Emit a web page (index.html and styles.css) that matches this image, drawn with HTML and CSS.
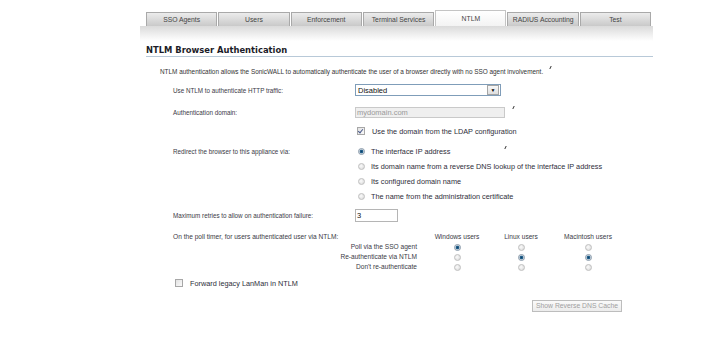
FILE: index.html
```html
<!DOCTYPE html>
<html>
<head>
    <title>NTLM</title>
    <link rel="stylesheet" href="styles.css">
</head>
<body>
    <div class="page">
        <div class="tabs">
            <div class="tab">SSO Agents</div>
            <div class="tab">Users</div>
            <div class="tab">Enforcement</div>
            <div class="tab">Terminal Services</div>
            <div class="tab active">NTLM</div>
            <div class="tab">RADIUS Accounting</div>
            <div class="tab">Test</div>
        </div>
        <div class="tabband"></div>

        <div class="section">
            <h2>NTLM Browser Authentication</h2>
            <p class="intro">NTLM authentication allows the SonicWALL to automatically authenticate the user of a browser directly with no SSO agent involvement.<span class="help"></span></p>

            <div class="row r-use">
                <div class="label">Use NTLM to authenticate HTTP traffic:</div>
                <div class="select"><span>Disabled</span><span class="arrow">&#9660;</span></div>
            </div>

            <div class="row r-domain">
                <div class="label">Authentication domain:</div>
                <div class="textbox disabled">mydomain.com</div>
                <span class="help help-domain"></span>
            </div>

            <div class="row r-ldap">
                <div class="label"></div>
                <div class="opt"><span class="check checked"></span>Use the domain from the LDAP configuration</div>
            </div>

            <div class="row r-redirect">
                <div class="label">Redirect the browser to this appliance via:</div>
                <div class="radios">
                    <div class="opt"><span class="radio on"></span>The interface IP address<span class="help help-ip"></span></div>
                    <div class="opt"><span class="radio"></span>Its domain name from a reverse DNS lookup of the interface IP address</div>
                    <div class="opt"><span class="radio"></span>Its configured domain name</div>
                    <div class="opt"><span class="radio"></span>The name from the administration certificate</div>
                </div>
            </div>

            <div class="row r-retries">
                <div class="label">Maximum retries to allow on authentication failure:</div>
                <div class="textbox small">3</div>
            </div>

            <div class="poll">
                <div class="poll-title">On the poll timer, for users authenticated user via NTLM:</div>
                <div class="colhead">Windows users</div>
                <div class="colhead">Linux users</div>
                <div class="colhead">Macintosh users</div>

                <div class="poll-label">Poll via the SSO agent</div>
                <div class="cell"><span class="radio on"></span></div>
                <div class="cell"><span class="radio"></span></div>
                <div class="cell"><span class="radio"></span></div>

                <div class="poll-label">Re-authenticate via NTLM</div>
                <div class="cell"><span class="radio"></span></div>
                <div class="cell"><span class="radio on"></span></div>
                <div class="cell"><span class="radio on"></span></div>

                <div class="poll-label">Don't re-authenticate</div>
                <div class="cell"><span class="radio"></span></div>
                <div class="cell"><span class="radio"></span></div>
                <div class="cell"><span class="radio"></span></div>
            </div>

            <div class="row r-lanman">
                <div class="opt"><span class="check"></span>Forward legacy LanMan in NTLM</div>
            </div>

            <div class="buttons">
                <div class="button">Show Reverse DNS Cache</div>
            </div>
        </div>
    </div>
</body>
</html>
```

FILE: styles.css
```css
body {
    margin: 0;
    background: #fff;
    font-family: "Liberation Sans", Arial, sans-serif;
    color: #3a3a46;
}
.page {
    margin-left: 140px;
    width: 513px;
}
.tabs {
    display: flex;
    align-items: flex-end;
    gap: 1px;
    height: 16px;
    margin-top: 10px;
    padding-left: 6px;
}
.tab {
    box-sizing: border-box;
    width: 71.3px;
    height: 14px;
    border: 1px solid #a9a9a9;
    border-bottom: none;
    background: linear-gradient(#ececec, #c9c9c9);
    font-size: 6.8px;
    line-height: 13px;
    text-align: center;
    color: #444;
}
.tab.active {
    height: 16px;
    line-height: 15px;
    background: linear-gradient(#fff, #f3f3f3);
    border-color: #c4c4c4;
}
.tabband {
    height: 15px;
    background: linear-gradient(#dadada, #fff);
}
.section {
    margin-left: 6px;
}
h2 {
    margin: 4px 0 0 0;
    padding-bottom: 1px;
    border-bottom: 1px solid #b8c9d8;
    font-family: "DejaVu Sans", Verdana, sans-serif;
    font-size: 8.4px;
    line-height: 10px;
    font-weight: bold;
    color: #1c1c28;
}
.intro {
    margin: 9px 0 0 14px;
    font-size: 6.4px;
    line-height: 9px;
    color: #333;
}
.help {
    display: inline-block;
    width: 1px;
    height: 3px;
    background: #333;
    margin-left: 7px;
    vertical-align: 5px;
    transform: skewX(-25deg);
}
.row {
    display: flex;
    align-items: center;
    padding-left: 27px;
    font-size: 6.3px;
}
.label {
    width: 182px;
    flex: none;
}
.r-use {
    height: 12px;
    margin-top: 8px;
}
.select {
    box-sizing: border-box;
    width: 146px;
    height: 12px;
    border: 1px solid #7f9db9;
    display: flex;
    justify-content: space-between;
    align-items: center;
    padding-left: 2px;
    font-size: 7.5px;
    color: #111;
}
.select .arrow {
    width: 10px;
    height: 8px;
    margin-right: 1px;
    border: 1px solid #a5a5a5;
    background: linear-gradient(#f8f8f8, #dedede);
    font-size: 5px;
    line-height: 8px;
    text-align: center;
    color: #000;
}
.textbox {
    box-sizing: border-box;
    border: 1px solid #a8a8a8;
    padding-left: 1px;
    font-size: 7.5px;
    color: #111;
}
.textbox.disabled {
    width: 150px;
    height: 11px;
    line-height: 9px;
    background: #efefef;
    border-color: #c9c9c9;
    color: #9a9a9a;
}
.textbox.small {
    width: 43px;
    height: 13px;
    line-height: 11px;
    border-color: #b5b5b5;
}
.help-domain {
    margin-left: 8px;
    align-self: flex-start;
    margin-top: 0;
}
.r-domain {
    height: 12px;
    margin-top: 10px;
}
.r-ldap {
    height: 12px;
    margin-top: 7px;
}
.opt {
    display: flex;
    align-items: center;
    font-size: 7.3px;
    color: #2e2e3a;
    white-space: nowrap;
}
.check {
    box-sizing: border-box;
    width: 8px;
    height: 8px;
    margin: 0 7px 0 2px;
    border: 1px solid #a7a7a7;
    background: linear-gradient(135deg, #e2e2e2, #fafafa);
    position: relative;
}
.check.checked::after {
    content: "";
    position: absolute;
    left: 1px;
    top: 0;
    width: 2px;
    height: 4px;
    border: solid #4a5a8a;
    border-width: 0 1px 1px 0;
    transform: rotate(40deg);
}
.radio {
    display: inline-block;
    box-sizing: border-box;
    width: 7px;
    height: 7px;
    border-radius: 50%;
    border: 1px solid #c0c0c0;
    background: radial-gradient(circle at 40% 40%, #fbfbfb, #d6d6d6);
}
.radio.on {
    border-color: #8a9aaa;
    background: radial-gradient(circle, #0d3f66 0, #2a6a96 45%, #cfd8e0 60%, #e8e8e8 100%);
}
.r-redirect {
    align-items: flex-start;
    margin-top: 7px;
}
.r-redirect .label {
    line-height: 15px;
}
.radios .opt {
    height: 15px;
}
.radios .radio {
    margin: 0 6px 0 3px;
}
.help-ip {
    margin-left: 55px;
    vertical-align: 0;
    align-self: flex-start;
    margin-top: 2px;
}
.r-retries {
    height: 13px;
    margin-top: 5px;
}
.poll {
    display: grid;
    grid-template-columns: 244px 80px 48px 86px;
    grid-auto-rows: 10px;
    margin: 10px 0 0 27px;
    font-size: 6.6px;
    line-height: 10px;
}
.poll-title {
    white-space: nowrap;
}
.colhead {
    text-align: center;
}
.poll-label {
    text-align: right;
}
.cell {
    display: flex;
    justify-content: center;
    align-items: center;
}
.r-lanman {
    height: 12px;
    margin-top: 5px;
}
.buttons {
    display: flex;
    justify-content: flex-end;
    margin-top: 11px;
    padding-right: 31px;
}
.button {
    box-sizing: border-box;
    width: 90px;
    height: 12px;
    border: 1px solid #bdbdbd;
    background: linear-gradient(#fafafa, #ececec);
    font-size: 6.8px;
    line-height: 10px;
    text-align: center;
    color: #a0a0a0;
}
```
